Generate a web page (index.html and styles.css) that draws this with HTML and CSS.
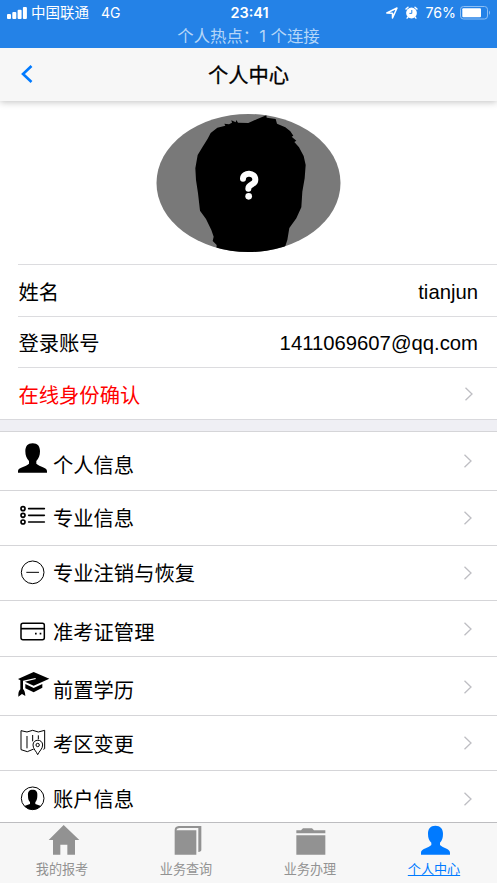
FILE: index.html
```html
<!DOCTYPE html>
<html lang="zh-CN">
<head>
<meta charset="utf-8">
<title>个人中心</title>
<link rel="stylesheet" href="styles.css">
</head>
<body>
<div class="app">
  <header class="status">
    <div class="status-row">
      <div class="carrier">
        <svg class="signal" viewBox="0 0 20 12" width="20" height="12" fill="#fff"><rect x="0" y="7" width="4" height="5" rx="1"/><rect x="5.3" y="5" width="4" height="7" rx="1"/><rect x="10.6" y="2.7" width="4" height="9.3" rx="1"/><rect x="15.9" y="0" width="4" height="12" rx="1"/></svg>
        <span>中国联通</span><span class="network">4G</span>
      </div>
      <div class="clock">23:41</div>
      <div class="device">
        <svg viewBox="0 0 12 12" width="12" height="12"><path d="M.8 6 11 1 6.500 11V6.200Z" fill="none" stroke="#fff" stroke-width="1.500" stroke-linejoin="round"/></svg>
        <svg class="alarm" viewBox="0 0 13 13" width="13" height="13"><circle cx="6.500" cy="7" r="5.400" fill="#fff"/><path d="M1 3 3 1.200M12 3 10 1.200M2.800 11.200l-.7.900M10.200 11.200l.7.900" stroke="#fff" stroke-width="1.400" stroke-linecap="round"/><path d="M6.800 4v3.400H4.400" fill="none" stroke="#2482e7"/></svg>
        <span class="percent">76%</span>
        <svg class="battery" viewBox="0 0 31 14" width="31" height="14"><rect x=".5" y=".5" width="27" height="12.5" rx="3" fill="none" stroke="#8dbff4"/><rect x="2.3" y="2.3" width="18.7" height="8.9" rx="1" fill="#fff"/><path d="M29 4.5q2 2.2 0 4.5Z" fill="#8dbff4"/></svg>
      </div>
    </div>
    <div class="hotspot">个人热点：1 个连接</div>
  </header>
  <nav class="navbar">
    <svg class="back" viewBox="0 0 12 18" width="12" height="18"><path d="M10.5 1 2 9l8.500 8" fill="none" stroke="#007aff" stroke-width="2.6"/></svg>
    <h1>个人中心</h1>
  </nav>
  <main>
    <section class="profile">
      <div class="portrait">
        <svg viewBox="48 42 555 414" width="185" height="138"><clipPath id="oval"><ellipse cx="325.500" cy="249" rx="276" ry="207"/></clipPath><g clip-path="url(#oval)"><path fill="#797979" d="M48 42h555v414H48Z"/><path fill="#000" d="M228 460 230 435 218 423 221 410 214 390 198 357 180 332 174 280 168 240 166 205 173 165 188 140 203 116 212 99 232 83 256 77 253 71 267 73 276 68 274 61 287 67 289 60 294 68 325 69 352 57 379 46 380 53 407 57 411 71 436 82 451 94 460 107 455 110 469 122 463 126 477 142 491 168 497 195 494 235 487 275 484 322 469 355 448 384 442 420 435 441 437 460Z"/><path d="M309 236C309 216 346 216 346 239C346 256 325 251 325 266" fill="none" stroke="#fff" stroke-width="18" stroke-linecap="round"/><circle cx="326" cy="289" r="10" fill="#fff"/></g></svg>
      </div>
      <div class="field"><span>姓名</span><span class="value">tianjun</span></div>
      <div class="field"><span>登录账号</span><span class="value">1411069607@qq.com</span></div>
      <div class="field confirm"><span>在线身份确认</span><svg class="chevron" viewBox="0 0 8 14" width="8" height="14"><path d="m.5.800 6.500 6.200-6.500 6.200"/></svg></div>
    </section>
    <section class="menu">
      <div class="item person"><span class="icon"><svg viewBox="54 40 88 90" width="29.330" height="30"><path d="M98 41C113 41 120 50 120 65C120 78 116 87 109 94V102C119 111 141 113 141 124V129H54V124C54 113 78 111 87 102V94C80 87 76 78 76 65C76 50 83 41 98 41Z"/></svg></span><span class="label">个人信息</span><svg class="chevron" viewBox="0 0 8 14" width="8" height="14"><path d="m.5.800 6.500 6.200-6.500 6.200"/></svg></div>
      <div class="item majors"><span class="icon"><svg viewBox="54 215 88 80" width="29.330" height="26.670" fill="none" stroke="#000" stroke-width="5" stroke-linecap="round"><circle cx="69" cy="235" r="6"/><circle cx="69" cy="255" r="6"/><circle cx="69" cy="275" r="6"/><path d="M86 235h47M86 255h47M86 275h47"/></svg></span><span class="label">专业信息</span><svg class="chevron" viewBox="0 0 8 14" width="8" height="14"><path d="m.5.800 6.500 6.200-6.500 6.200"/></svg></div>
      <div class="item cancel"><span class="icon"><svg viewBox="54 388 88 80" width="29.330" height="26.670" fill="none" stroke="#000" stroke-width="3"><circle cx="98" cy="428" r="34"/><path d="M79 428h38"/></svg></span><span class="label">专业注销与恢复</span><svg class="chevron" viewBox="0 0 8 14" width="8" height="14"><path d="m.5.800 6.500 6.200-6.500 6.200"/></svg></div>
      <div class="item card"><span class="icon"><svg viewBox="54 57 88 80" width="29.330" height="26.670" fill="none" stroke="#000" stroke-width="4.500"><rect x="63" y="73" width="70" height="49" rx="6"/><path d="M63 89h70" stroke-width="5"/><path d="M105 104h5M119 104h5" stroke-width="5"/></svg></span><span class="label">准考证管理</span><svg class="chevron" viewBox="0 0 8 14" width="8" height="14"><path d="m.5.800 6.500 6.200-6.500 6.200"/></svg></div>
      <div class="item degree"><span class="icon"><svg viewBox="54 215 95 80" width="31.670" height="26.670"><path d="M101 218 148 238 101 259 75 247 108 239 106 236 69 244V269Q75 274 76 290L66 284 55 292Q54 276 61 270V243L54 239Z"/><path d="M76 254 101 266 127 254V265L101 279 76 267Z"/></svg></span><span class="label">前置学历</span><svg class="chevron" viewBox="0 0 8 14" width="8" height="14"><path d="m.5.800 6.500 6.200-6.500 6.200"/></svg></div>
      <div class="item region"><span class="icon"><svg viewBox="54 45 88 80" width="29.330" height="26.670" fill="none" stroke="#000" stroke-width="3" stroke-linejoin="round"><path d="M101 108 99 106 82 113 63 107V50L81 54 98 49 115 54 134 49V104L130 106M81 66V103M98 63V82M115 64V76"/><path d="M113 122C109 112 99 105 99 93C99 74 128 74 128 93C128 105 117 112 113 122Z"/><circle cx="113" cy="93" r="5"/></svg></span><span class="label">考区变更</span><svg class="chevron" viewBox="0 0 8 14" width="8" height="14"><path d="m.5.800 6.500 6.200-6.500 6.200"/></svg></div>
      <div class="item account"><span class="icon"><svg viewBox="54 208 88 80" width="29.330" height="26.670"><circle cx="98" cy="248" r="34" fill="none" stroke="#000" stroke-width="3"/><path d="M98 222C108 222 113 228 112 240C112 250 109 256 106 259V265L123 271Q113 282 98 282Q83 282 73 271L90 265V259C86 255 84 250 84 240C83 228 88 222 98 222Z"/></svg></span><span class="label">账户信息</span><svg class="chevron" viewBox="0 0 8 14" width="8" height="14"><path d="m.5.800 6.500 6.200-6.500 6.200"/></svg></div>
    </section>
  </main>
  <footer class="tabs">
    <a class="tab"><svg viewBox="143 328 96 94" width="32" height="31.330"><path d="M190 331 237 376H224V420H201V390H180V420H158V376H145Z"/></svg><span>我的报考</span></a>
    <a class="tab"><svg viewBox="515 328 96 94" width="32" height="31.330"><path d="M535 334H603V405Q603 411 594 412V340H538Q530 340 528 347H588V420H523V346Q523 336 535 334Z"/></svg><span>业务查询</span></a>
    <a class="tab"><svg viewBox="224 133 96 94" width="32" height="31.330"><path d="M228 152H242L248 146H275L281 152H315V161H228ZM228 167H315V225H228Z"/></svg><span>业务办理</span></a>
    <a class="tab active"><svg viewBox="597 133 96 94" width="32" height="31.330"><path d="M643 138C658 138 666 147 666 162C666 175 663 182 657 189V196C666 205 687 207 687 219V225H600V219C600 207 622 205 631 196V189C624 182 621 175 621 162C621 147 628 138 643 138Z"/></svg><span>个人中心</span></a>
  </footer>
</div>
</body>
</html>
```
FILE: styles.css
```css
* { box-sizing: border-box; }
body {
  margin: 0;
  background: #fff;
  color: #000;
  font-family: "Liberation Sans", "Noto Sans CJK SC", sans-serif;
}
svg { display: block; flex: none; }
.app {
  width: 497px;
  height: 883px;
  display: flex;
  flex-direction: column;
  overflow: hidden;
}
.status {
  height: 48px;
  flex: none;
  background: #2482e7;
  color: #fff;
  font-family: Inter, "Noto Sans CJK SC", sans-serif;
}
.status-row {
  height: 25px;
  display: grid;
  grid-template-columns: 1fr 60px 1fr;
  align-items: center;
  padding: 1px 7px 0;
  font-size: 14.5px;
  line-height: 24px;
}
.carrier, .device { display: flex; align-items: center; }
.signal { margin-right: 4px; }
.network { margin-left: 12px; font-size: 14px; }
.clock { text-align: center; font-weight: 600; font-size: 14.5px; padding-left: 2px; }
.device { justify-content: flex-end; }
.alarm { margin: -1px 0 0 7px; }
.percent { margin: 0 4px 0 7px; font-size: 14.2px; }
.battery { margin: -1px -1px 0 0; }
.hotspot {
  text-align: center;
  font-size: 16.4px;
  line-height: 22px;
  color: #b5d6f8;
}
.navbar {
  height: 53px;
  flex: none;
  display: grid;
  grid-template-columns: 60px 1fr 60px;
  align-items: center;
  background: #f7f7f7;
  box-shadow: 0 1px 7px rgba(0, 0, 0, .25);
  clip-path: inset(0 0 -12px);
}
.back { margin: -2px 0 0 21px; }
h1 {
  margin: 0;
  text-align: center;
  font-size: 20.3px;
  line-height: 30px;
  font-weight: 400;
  padding-top: 2px;
  -webkit-text-stroke: .3px #000;
}
main { flex: 1; min-height: 0; }
.profile {
  padding-left: 18px;
  border-bottom: 1px solid #d9d9dd;
}
.portrait { height: 163px; padding: 13px 0 0 138px; }
.field {
  height: 51.5px;
  display: flex;
  align-items: center;
  justify-content: space-between;
  border-top: 1px solid #dcdcdf;
  padding: 5px 19px 0 .5px;
  font-size: 20.3px;
  line-height: 30px;
}
.value { margin-top: -2px; }
.confirm { color: #f00; }
.chevron {
  margin-left: auto;
  fill: none;
  stroke: #bebec3;
  stroke-width: 1.3;
}
.confirm .chevron { margin: -4px 5.5px 0 auto; }
.menu { border-top: 11px solid #efeff4; }
.item {
  display: flex;
  align-items: center;
  padding: 0 25px 0 18px;
  border-top: 1px solid #d5d5d8;
}
.icon { width: 35px; flex: none; }
.label { font-size: 20.3px; line-height: 30px; }
.person { height: 59px; }
.person .icon { margin-top: -5px; }
.person .label { padding-top: 11px; }
.majors { height: 55px; }
.majors .icon { margin-top: -5px; }
.majors .label { padding-top: 3px; }
.cancel { height: 55px; }
.cancel .label { padding-top: 3px; }
.card { height: 56px; }
.card .icon { padding-top: 7px; }
.card .label { padding-top: 9px; }
.card .chevron, .degree .chevron { margin-top: 2px; }
.degree { height: 59px; }
.degree .icon { margin-top: -2px; }
.degree .label { padding-top: 11px; }
.region { height: 55px; }
.region .label { padding-top: 4px; }
.account { height: 52px; }
.account .chevron { margin-top: 5px; }
.account .icon { margin-top: 4px; }
.account .label { margin-top: 7px; }
.tabs {
  height: 61px;
  flex: none;
  display: grid;
  grid-template-columns: repeat(4, 124px);
  background: #f7f7f7;
  border-top: 1px solid #bdbdc0;
}
.tab {
  display: flex;
  flex-direction: column;
  align-items: center;
  padding-top: 1px;
  color: #929292;
  fill: #929292;
  font-size: 13.1px;
  line-height: 29px;
}
.active { color: #007aff; fill: #007aff; text-decoration: underline; }
.tab svg { margin-left: 3px; }
.tab:nth-child(3) svg { margin-left: 1px; }
```
